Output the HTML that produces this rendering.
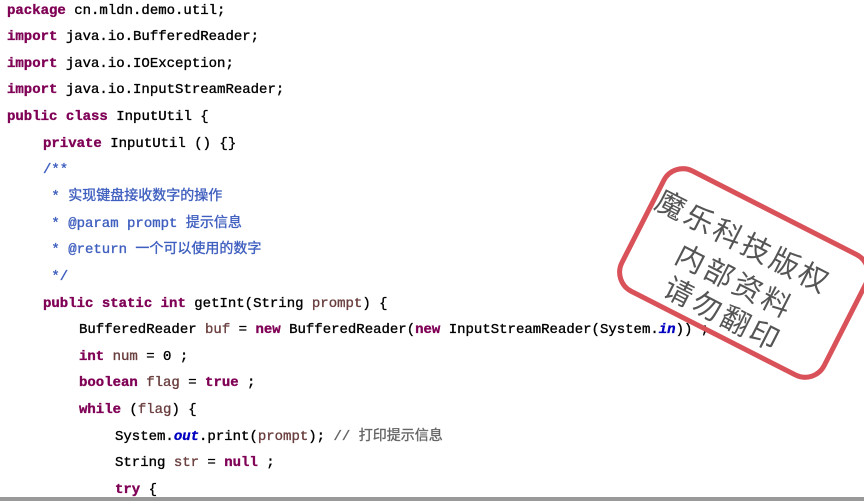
<!DOCTYPE html>
<html><head><meta charset="utf-8"><style>
html,body{margin:0;padding:0;background:#fff;width:864px;height:501px;overflow:hidden;position:relative}
.l{position:absolute;left:7px;font-family:"Liberation Mono","Noto Sans CJK SC",monospace;font-size:14px;color:#000;white-space:pre;line-height:16px;-webkit-text-stroke:0.35px currentColor}
.k{color:#7f0055;font-weight:bold}
.c{color:#3f5fbf}
.v{color:#6a3e3e}
.f{color:#0000c0;font-style:italic;font-weight:bold}
.g{color:#666}
.stamp{position:absolute;left:628px;top:203px;width:232px;height:140px;border:5px solid #d9525a;border-radius:24px;transform:rotate(27deg);box-sizing:border-box}
.st{position:absolute;font-family:"Noto Sans CJK SC",sans-serif;font-size:29px;color:#555;transform:rotate(27deg);transform-origin:left top;white-space:nowrap;letter-spacing:3px}
.bar{position:absolute;left:0;top:497px;width:864px;height:4px;background:#999}
</style></head><body>
<div class="l" style="top:3px"><span class="k">package</span> cn.mldn.demo.util;</div>
<div class="l" style="top:29px"><span class="k">import</span> java.io.BufferedReader;</div>
<div class="l" style="top:56px"><span class="k">import</span> java.io.IOException;</div>
<div class="l" style="top:82px"><span class="k">import</span> java.io.InputStreamReader;</div>
<div class="l" style="top:109px"><span class="k">public</span> <span class="k">class</span> InputUtil {</div>
<div class="l" style="top:136px;left:43px"><span class="k">private</span> InputUtil () {}</div>
<div class="l c" style="top:162px;left:43px">/**</div>
<div class="l c" style="top:189px;left:43px"> * 实现键盘接收数字的操作</div>
<div class="l c" style="top:216px;left:43px"> * @param prompt 提示信息</div>
<div class="l c" style="top:242px;left:43px"> * @return 一个可以使用的数字</div>
<div class="l c" style="top:269px;left:43px"> */</div>
<div class="l" style="top:296px;left:43px"><span class="k">public</span> <span class="k">static</span> <span class="k">int</span> getInt(String <span class="v">prompt</span>) {</div>
<div class="l" style="top:322px;left:79px">BufferedReader <span class="v">buf</span> = <span class="k">new</span> BufferedReader(<span class="k">new</span> InputStreamReader(System.<span class="f">in</span>)) ;</div>
<div class="l" style="top:349px;left:79px"><span class="k">int</span> <span class="v">num</span> = 0 ;</div>
<div class="l" style="top:375px;left:79px"><span class="k">boolean</span> <span class="v">flag</span> = <span class="k">true</span> ;</div>
<div class="l" style="top:402px;left:79px"><span class="k">while</span> (<span class="v">flag</span>) {</div>
<div class="l" style="top:429px;left:115px">System.<span class="f">out</span>.print(<span class="v">prompt</span>); <span class="g">// 打印提示信息</span></div>
<div class="l" style="top:455px;left:115px">String <span class="v">str</span> = <span class="k">null</span> ;</div>
<div class="l" style="top:482px;left:115px"><span class="k">try</span> {</div>
<div class="stamp"></div>
<div class="st" style="left:668px;top:178px">魔乐科技版权</div>
<div class="st" style="left:688px;top:232px">内部资料</div>
<div class="st" style="left:676px;top:265px">请勿翻印</div>
<div class="bar"></div>
</body></html>
